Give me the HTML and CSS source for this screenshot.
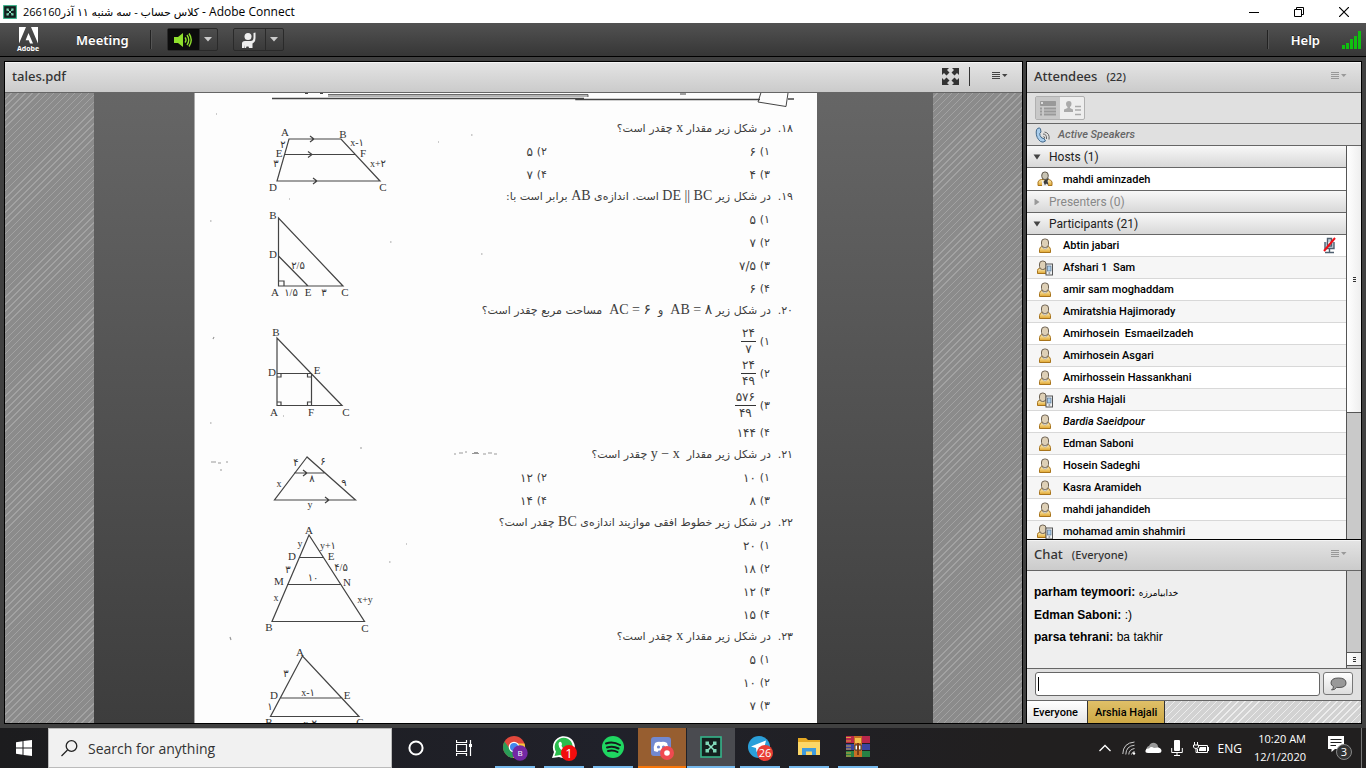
FILE: index.html
```html
<!DOCTYPE html>
<html lang="en">
<head>
<meta charset="utf-8">
<title>Adobe Connect</title>
<link rel="stylesheet" href="styles.css">
</head>
<body>
<svg class="defs" aria-hidden="true">
  <defs>
    <linearGradient id="gold" x1="0" y1="0" x2="0" y2="1"><stop offset="0" stop-color="#fdf0c0"/><stop offset="1" stop-color="#e0a52c"/></linearGradient>
    <symbol id="person" viewBox="0 0 16 16">
      <path d="M2.500 14.500V11.500Q3 8.500 5 8.500H11Q13 8.500 13.500 11.500V14.500Z" fill="url(#gold)" stroke="#a8741c"/>
      <path d="M5 9Q8 13 11 9" fill="#f4f4f4" stroke="#999" stroke-width=".6"/>
      <rect x="4.500" y="1" width="7" height="8.500" rx="3" fill="#ded0b6" stroke="#6d6253"/>
    </symbol>
    <symbol id="device" viewBox="0 0 16 16">
      <path d="M.5 13.500V10.500Q.5 8.500 2.500 8.500H9V13.500Z" fill="url(#gold)" stroke="#a8741c"/>
      <rect x="2.500" y="1" width="6.500" height="8.500" rx="3" fill="#ded0b6" stroke="#6d6253"/>
      <rect x="9" y="4" width="6.500" height="11" fill="#f2f4f6" stroke="#555"/>
      <rect x="10.500" y="6" width="3.500" height="5" fill="#a9cdec" stroke="#58708a" stroke-width=".7"/>
      <path d="M11.500 13H13.200" stroke="#555"/>
    </symbol>
    <symbol id="host" viewBox="0 0 16 16">
      <path d="M1 14.500V11Q2 8.500 4.500 8.500H11.500Q14 8.500 15 11V14.500Z" fill="url(#gold)" stroke="#a8741c"/>
      <path d="M5 9L8 12 11 9V15H5Z" fill="#eee"/>
      <path d="M8 8.500L12 7 10.500 10 11.500 14 9 12.500 8 14.500 6.500 11Z" fill="#3c3c3c"/>
      <rect x="4.800" y="1" width="6.400" height="7.500" rx="3" fill="#c9c4b4" stroke="#5d5548"/>
    </symbol>
    <symbol id="menu" viewBox="0 0 16 8"><path d="M0 .5H8M0 2.500H8M0 4.500H8M0 6.500H8" stroke="currentColor"/><path d="M10 2H15.500L12.750 5Z" fill="currentColor"/></symbol>
    <symbol id="connect" viewBox="0 0 22 22"><rect x="1" y="1" width="20" height="20" fill="#14201e" stroke="#35b58a" stroke-width="1.600"/><path d="M7.500 7.500L14.500 14.500M14.500 7.500L7.500 14.500" stroke="#8fe6c6" stroke-width="1.500"/><path d="M5.500 5.500H9V9H5.500ZM13 5.500H16.500V9H13ZM5.500 13H9V16.500H5.500ZM13 13H16.500V16.500H13Z" fill="#7fd9b8"/></symbol>
  </defs>
</svg>

<header class="titlebar">
  <svg class="app-icon" viewBox="0 0 22 22"><use href="#connect"/></svg>
  <span class="window-title"><bdi dir="rtl">کلاس حساب - سه شنبه ۱۱ آذر266160</bdi> - Adobe Connect</span>
  <button class="win-btn" aria-label="Minimize"><svg viewBox="0 0 10 10"><path d="M0 5.500H10" stroke="#000"/></svg></button>
  <button class="win-btn" aria-label="Restore"><svg viewBox="0 0 10 10"><path d="M.5 2.500H7.500V9.500H.5ZM2.500 2V.5H9.500V7.500H8" fill="none" stroke="#000"/></svg></button>
  <button class="win-btn" aria-label="Close"><svg viewBox="0 0 10 10"><path d="M0 0L10 10M10 0L0 10" stroke="#000" stroke-width="1.200"/></svg></button>
</header>

<nav class="toolbar">
  <div class="adobe"><svg viewBox="0 0 19 17"><path d="M0 0H7L0 16.500ZM12 0H19V16.500ZM9.500 6L14 16.500H11L9.800 13.300H6.600Z" fill="#fff"/></svg><span>Adobe</span></div>
  <button class="menu-btn meeting">Meeting</button>
  <i class="divider"></i>
  <div class="split speaker">
    <button aria-label="Speaker"><svg width="18" height="16" viewBox="0 0 18 16"><path d="M0 5H4L9 1V15L4 11H0Z" fill="#8fe02d"/><path d="M11 5.500Q13 8 11 10.500M13 3Q16.500 8 13 13M15 1.500Q19.500 8 15 14.500" fill="none" stroke="#8fe02d" stroke-width="1.400"/></svg></button>
    <button aria-label="Speaker options"><svg width="8" height="5" viewBox="0 0 8 5"><path d="M0 0H8L4 4.500Z" fill="#ccc"/></svg></button>
  </div>
  <div class="split">
    <button aria-label="Raise hand"><svg width="16" height="16" viewBox="0 0 16 16"><circle cx="7" cy="4.500" r="3.500" fill="#eee"/><path d="M1 16V11.500Q1 9 4 9H9.500Q12.500 9 12.500 5.500V1L14.500 .5V6Q14.500 10 11.500 11.500V16H8L7.500 14.500H5.500L5 16H3.500V13L3 16Z" fill="#eee"/></svg></button>
    <button aria-label="Status options"><svg width="8" height="5" viewBox="0 0 8 5"><path d="M0 0H8L4 4.500Z" fill="#ccc"/></svg></button>
  </div>
  <i class="divider push"></i>
  <button class="menu-btn help">Help</button>
  <svg class="signal" viewBox="0 0 20 18"><path d="M0 14H3V18H0ZM4 12H7V18H4ZM8 8H11V18H8ZM12 5H15V18H12ZM16 0H19V18H16Z" fill="#0fc00f"/></svg>
</nav>

<main class="workspace">
  <section class="pod share">
    <header class="pod-head">
      <h2>tales.pdf</h2>
      <button class="icon-btn fullscreen" aria-label="Full screen"><svg width="17" height="17" viewBox="0 0 17 17" fill="#333"><path d="M0 0H7L5 2 7.500 4.500 4.500 7.500 2 5 0 7ZM17 0H10L12 2 9.500 4.500 12.500 7.500 15 5 17 7ZM0 17H7L5 15 7.500 12.500 4.500 9.500 2 12 0 10ZM17 17H10L12 15 9.500 12.500 12.500 9.500 15 12 17 10Z"/></svg></button>
      <i class="head-rule"></i>
      <button class="icon-btn dark" aria-label="Share options"><svg width="16" height="8"><use href="#menu"/></svg></button>
    </header>
    <div class="viewer">
      <div class="backdrop">
        <div class="page" lang="fa" dir="rtl">
          <svg class="page-top" width="623" height="25" viewBox="194 93 623 25" fill="none" stroke="#444">
            <path d="M272 98.500H584M576 98V99.500H760M788 99H794" stroke-width="1.500"/><path d="M328 94.500H588V97M328 96H588" stroke-width=".8"/><path d="M761 92.500L758 102 786 106.500 788 93"/>
            <path d="M305 93.500H308M320 93.500H323M680 94H686"/>
          </svg>
          <article class="question">
            <h3><b>۱۸.</b>در شکل زیر مقدار <span dir="ltr">x</span> چقدر است؟</h3>
            <ol class="two"><li><b>۱)</b>۶</li><li><b>۲)</b>۵</li><li><b>۳)</b>۴</li><li><b>۴)</b>۷</li></ol>
            <svg class="figure" width="220" height="68" viewBox="194 118 220 68" direction="ltr">
              <path d="M289 139H341L380 181H277ZM285 154.500H355M310 136L314 139 310 142M308 151.500L312 154.500 308 157.500M313 178L317 181 313 184"/>
              <text x="285" y="136">A</text><text x="343" y="138">B</text><text x="279" y="157">E</text><text x="363" y="157">F</text><text x="273" y="191">D</text><text x="383" y="191">C</text><text x="283" y="148" class="n">۲</text><text x="276" y="167" class="n">۳</text><text x="357" y="146" class="n">x-۱</text><text x="378" y="167" class="n">x+۲</text>
              <path class="speck" d="M471 135h1.500M289 199h1M210 221h1.500M390 242h1.500M481 254h1.500M216 114h1M438 142h1"/>
            </svg>
          </article>
          <article class="question">
            <h3><b>۱۹.</b>در شکل زیر <span dir="ltr">DE || BC</span> است. اندازه‌ی <span dir="ltr">AB</span> برابر است با:</h3>
            <ol><li><b>۱)</b>۵</li><li><b>۲)</b>۷</li><li><b>۳)</b>۷/۵</li><li><b>۴)</b>۶</li></ol>
            <svg class="figure" width="220" height="114" viewBox="194 186 220 114" direction="ltr">
              <path d="M278.500 218V286H343ZM278.500 256L308 286M278.500 281H284V286"/>
              <text x="273" y="219">B</text><text x="273" y="258">D</text><text x="275" y="296">A</text><text x="308" y="296">E</text><text x="345" y="296">C</text><text x="298" y="269" class="n">۲/۵</text><text x="291" y="296" class="n">۱/۵</text><text x="324" y="296" class="n">۳</text>
            </svg>
          </article>
          <article class="question">
            <h3><b>۲۰.</b>در شکل زیر <span dir="ltr">AB = ۸</span>&nbsp; و &nbsp;<span dir="ltr">AC = ۶</span>&nbsp; مساحت مربع چقدر است؟</h3>
            <ol class="fractions"><li><b>۱)</b><span class="frac"><i>۲۴</i><i>۷</i></span></li><li><b>۲)</b><span class="frac"><i>۲۴</i><i>۴۹</i></span></li><li><b>۳)</b><span class="frac"><i>۵۷۶</i><i>۴۹</i></span></li><li><b>۴)</b>۱۴۴</li></ol>
            <svg class="figure" width="220" height="144" viewBox="194 300 220 144" direction="ltr">
              <path d="M277 338V405.500H342ZM277 373.500H311.500V405.500M281 373.500V377H277M307.500 373.500V377H311.500M277 402H281V405.500M311.500 402H307.500V405.500"/>
              <text x="276" y="336">B</text><text x="272" y="376">D</text><text x="317" y="374">E</text><text x="274" y="416">A</text><text x="311" y="416">F</text><text x="346" y="416">C</text>
              <path class="speck" d="M213 339l1-2M210 423h1.500M283 416h1M360 448h2"/>
            </svg>
          </article>
          <article class="question">
            <h3><b>۲۱.</b>در شکل زیر مقدار &nbsp;<span dir="ltr">y − x</span> چقدر است؟</h3>
            <ol class="two"><li><b>۱)</b>۱۰</li><li><b>۲)</b>۱۲</li><li><b>۳)</b>۸</li><li><b>۴)</b>۱۴</li></ol>
            <svg class="figure" width="220" height="68" viewBox="194 444 220 68" direction="ltr">
              <path d="M307 457L274.500 500H355.500ZM294 473H325.500M303 470L307 473 303 476M325 497L329 500 325 503"/>
              <text x="296" y="466" class="n">۴</text><text x="323" y="465" class="n">۶</text><text x="312" y="482" class="n">۸</text><text x="279" y="487" class="n">x</text><text x="344" y="486" class="n">۹</text><text x="310" y="508" class="n">y</text>
              <path class="speck" d="M211 462h5M218 463h3M226 462h2M220 470h2M454 454h2M459 453h4M465 452h2M472 453.500h7M474 452.500h4M483 454h3M488 453h4M494 454h3"/>
            </svg>
          </article>
          <article class="question">
            <h3><b>۲۲.</b>در شکل زیر خطوط افقی موازیند اندازه‌ی <span dir="ltr">BC</span> چقدر است؟</h3>
            <ol><li><b>۱)</b>۲۰</li><li><b>۲)</b>۱۸</li><li><b>۳)</b>۱۲</li><li><b>۴)</b>۱۵</li></ol>
            <svg class="figure" width="220" height="114" viewBox="194 512 220 114" direction="ltr">
              <path d="M309 535L272 621.500H364.500ZM299 557.500H324M287 584.500H341.500"/>
              <text x="309" y="534">A</text><text x="292" y="560">D</text><text x="331" y="560">E</text><text x="279" y="585">M</text><text x="347" y="586">N</text><text x="269" y="631">B</text><text x="365" y="632">C</text><text x="300" y="547" class="n">y</text><text x="328" y="549" class="n">y+۱</text><text x="288" y="573" class="n">۳</text><text x="341" y="571" class="n">۴/۵</text><text x="313" y="581" class="n">۱۰</text><text x="276" y="601" class="n">x</text><text x="365" y="603" class="n">x+y</text>
              <path class="speck" d="M389 562h1.500M230 637l1 3M406 544h1"/>
            </svg>
          </article>
          <article class="question">
            <h3><b>۲۳.</b>در شکل زیر مقدار <span dir="ltr">x</span> چقدر است؟</h3>
            <ol><li><b>۱)</b>۵</li><li><b>۲)</b>۱۰</li><li><b>۳)</b>۷</li></ol>
            <svg class="figure" width="220" height="91" viewBox="194 626 220 91" direction="ltr">
              <path d="M302.500 656L270.500 716.500H359ZM280 698H342.500"/>
              <text x="300" y="656">A</text><text x="274" y="699">D</text><text x="347" y="699">E</text><text x="269" y="726">B</text><text x="360" y="726">C</text><text x="286" y="677" class="n">۳</text><text x="308" y="696" class="n">x-۱</text><text x="270" y="710" class="n">۱</text><text x="310" y="727" class="n">x-۲</text>
            </svg>
          </article>
        </div>
      </div>
    </div>
  </section>

  <aside class="side">
    <section class="attendees">
      <header class="pod-head"><h2>Attendees</h2><small>(22)</small><button class="icon-btn end" aria-label="Attendee options"><svg width="16" height="8"><use href="#menu"/></svg></button></header>
      <div class="views"><div class="view-switch">
        <button class="on" aria-label="Attendee list"><svg width="16" height="15" viewBox="0 0 16 15"><path d="M.5.5H15.500V4.500H.5Z" fill="#999" stroke="#999"/><path d="M1 1h2v2H1Z" fill="#ddd"/><path d="M0 7.500H2M4 7.500H16M0 10.500H2M4 10.500H16M0 13.500H2M4 13.500H16" stroke="#999" stroke-width="2"/></svg></button>
        <button aria-label="Status view"><svg width="17" height="15" viewBox="0 0 17 15"><path d="M5 0Q7.500 0 7.500 3 7.500 5 6 6V7L9 8.500V11H0V8.500L3.500 7V6Q2 5 2 3 2 0 5 0Z" fill="#aaa"/><path d="M11 5.500H17M11 9H17M11 13.500H17" stroke="#aaa" stroke-width="1.600"/></svg></button>
      </div></div>
      <div class="speakers"><svg width="16" height="16" viewBox="0 0 16 16"><path d="M2.500 1.500Q5 0 5.500 2L6 5Q4 6 5 8.500 6.500 12 9 11.500L10.500 14Q8 16 5.500 14.500 1 11 1.200 5 1.300 2.500 2.500 1.500Z" fill="#a9cdec" stroke="#42688a"/><path d="M8 7Q12 7 11.500 12M8.500 9.500Q10 9.500 9.500 11.500M9.500 5Q15 6 14 12.500" fill="none" stroke="#666"/></svg><em>Active Speakers</em></div>
      <div class="roster">
        <div class="roster-list">
          <button class="group"><svg viewBox="0 0 8 6"><path d="M.5.5H7.500L4 5.500Z" fill="#444"/></svg>Hosts (1)</button>
          <ul class="hosts"><li><svg><use href="#host"/></svg>mahdi aminzadeh</li></ul>
          <button class="group off"><svg viewBox="0 0 8 6"><path d="M1.500-.5V6.500L6.500 3Z" fill="#999"/></svg>Presenters (0)</button>
          <button class="group"><svg viewBox="0 0 8 6"><path d="M.5.5H7.500L4 5.500Z" fill="#444"/></svg>Participants (21)</button>
          <ul>
            <li><svg><use href="#person"/></svg>Abtin jabari<svg class="muted" viewBox="0 0 13 17"><path d="M4.500 1.500H8.500V9H4.500ZM2 5V11.500H11V5M6.500 11.500V15M2 15.500H11" fill="#c9d4df" stroke="#4f6070" stroke-width="1.400"/><path d="M1 14L12 1" stroke="#f00f16" stroke-width="2"/></svg></li>
            <li><svg><use href="#device"/></svg>Afshari 1&nbsp; Sam</li>
            <li><svg><use href="#person"/></svg>amir sam moghaddam</li>
            <li><svg><use href="#person"/></svg>Amiratshia Hajimorady</li>
            <li><svg><use href="#person"/></svg>Amirhosein&nbsp; Esmaeilzadeh</li>
            <li><svg><use href="#person"/></svg>Amirhosein Asgari</li>
            <li><svg><use href="#person"/></svg>Amirhossein Hassankhani</li>
            <li><svg><use href="#device"/></svg>Arshia Hajali</li>
            <li><svg><use href="#person"/></svg><em>Bardia Saeidpour</em></li>
            <li><svg><use href="#person"/></svg>Edman Saboni</li>
            <li><svg><use href="#person"/></svg>Hosein Sadeghi</li>
            <li><svg><use href="#person"/></svg>Kasra Aramideh</li>
            <li><svg><use href="#person"/></svg>mahdi jahandideh</li>
            <li><svg><use href="#device"/></svg>mohamad amin shahmiri</li>
          </ul>
        </div>
        <div class="scrollbar"><div class="thumb long"></div></div>
      </div>
    </section>

    <section class="chat">
      <header class="pod-head"><h2>Chat</h2><small>(Everyone)</small><button class="icon-btn end" aria-label="Chat options"><svg width="16" height="8"><use href="#menu"/></svg></button></header>
      <div class="log">
        <div class="messages">
          <p><b>parham teymoori:</b> <bdi class="fa">خدابیامرزه</bdi></p>
          <p><b>Edman Saboni:</b> :)</p>
          <p><b>parsa tehrani:</b> ba takhir</p>
        </div>
        <div class="scrollbar bottom"><div class="thumb short"></div></div>
      </div>
      <form class="compose">
        <label class="field"><input type="text" aria-label="Chat message"><i class="caret"></i></label>
        <button type="button" class="send" aria-label="Send message"><svg width="17" height="14" viewBox="0 0 17 14"><path d="M8.500 1Q16 1 16 6 16 10.500 9 10.500L6.500 10.400Q5 13 1.500 13 3.500 11.500 3.500 9.500 1 8.500 1 6 1 1 8.500 1Z" fill="#999" stroke="#555"/></svg></button>
      </form>
      <div class="tabs"><button>Everyone</button><button class="alert">Arshia Hajali</button></div>
    </section>
  </aside>
</main>

<footer class="taskbar">
  <button class="start" aria-label="Start"><svg width="16" height="16" viewBox="0 0 16 16" fill="#fff"><path d="M0 2.200L6.500 1.300V7.500H0ZM7.500 1.100L16 0V7.500H7.500ZM0 8.500H6.500V14.700L0 13.800ZM7.500 8.500H16V16L7.500 14.900Z"/></svg></button>
  <label class="search"><svg width="17" height="17" viewBox="0 0 17 17"><circle cx="10.500" cy="6" r="5.300" fill="none" stroke="#222" stroke-width="1.300"/><path d="M6.500 10L.5 16" stroke="#222" stroke-width="1.300"/></svg><input type="text" placeholder="Search for anything" aria-label="Search for anything"></label>
  <button class="task" aria-label="Cortana"><svg width="16" height="16" viewBox="0 0 16 16"><circle cx="8" cy="8" r="6.600" fill="none" stroke="#fff" stroke-width="2"/></svg></button>
  <button class="task" aria-label="Task view"><svg width="16" height="16" viewBox="0 0 16 16" fill="none" stroke="#fff"><path d="M.5 0V2.500H10.500V0M.5 4.500H10.500V11.500H.5ZM.5 16V13.500H10.500V16M14.500 0V16" stroke-width="1.200"/><path d="M13 4h3v3h-3Z" fill="#fff" stroke="none"/></svg></button>
  <div class="apps">
    <button class="app" aria-label="Chrome"><svg viewBox="0 0 26 26"><circle cx="12" cy="12" r="11" fill="#e2483c"/><path d="M2.500 6.500A11 11 0 0 0 11 23L15 15 8 14Z" fill="#2a9d57"/><path d="M11 23A11 11 0 0 0 22.500 8.500H12L16 14Z" fill="#f5c73b"/><circle cx="12" cy="12" r="5.300" fill="#fff"/><circle cx="12" cy="12" r="4" fill="#4286ee"/><circle cx="18" cy="18" r="7.700" fill="#7428a4"/><text x="18" y="21" font-size="8">B</text></svg></button>
    <button class="app" aria-label="WhatsApp"><svg viewBox="0 0 26 26"><path d="M1 23L3 17A11 11 0 1 1 8 22Z" fill="#fff"/><path d="M3.500 21L5 16.500A9 9 0 1 1 9 20Z" fill="#2bbc4c"/><path d="M8 7.500Q10 5.500 11 9L10.500 11Q12 14 14.500 14.500L16 13.500 18.500 15Q17 18 14 17 8 15 7.500 9Z" fill="#fff"/><circle cx="18" cy="18" r="8" fill="#f20d0d"/><text x="18" y="22.500" font-size="13">1</text></svg></button>
    <button class="app" aria-label="Spotify"><svg viewBox="0 0 26 26"><circle cx="13" cy="12" r="11" fill="#1fd761"/><path d="M6 8.500Q13 6 20 10M7 12.500Q13 10.500 18.500 13.500M8 16Q13 14.500 17.500 17" fill="none" stroke="#161a1c" stroke-width="2" stroke-linecap="round"/></svg></button>
    <button class="app discord" aria-label="Discord"><svg viewBox="0 0 26 26"><path d="M5 2H19Q22 2 22 5V23L18 21H5Q2 21 2 18V5Q2 2 5 2Z" fill="#7289d0"/><path d="M6 8Q9 6 12 7 15 6 18 8 20 12 19 16L15.500 17 14.500 15.500H9.500L8.500 17 5 16Q4 12 6 8Z" fill="#fff"/><circle cx="9.500" cy="12" r="1.600" fill="#7289d0"/><circle cx="14.500" cy="12" r="1.600" fill="#7289d0"/><circle cx="18" cy="18" r="7" fill="#f04a50"/><circle cx="18" cy="18" r="2.800" fill="#fff"/></svg></button>
    <button class="app active" aria-label="Adobe Connect"><svg viewBox="-2 -1 26 26"><use href="#connect" width="22" height="22"/></svg></button>
    <button class="app" aria-label="Telegram"><svg viewBox="0 0 26 26"><circle cx="12" cy="12" r="11" fill="#2b9fd9"/><path d="M4 11.500L19 5.500 16 18 11.500 15 9.500 17 9 13Z" fill="#fff"/><circle cx="18" cy="18" r="8" fill="#e93e35"/><text x="18" y="22" font-size="11">26</text></svg></button>
    <button class="app" aria-label="File Explorer"><svg viewBox="0 0 26 26"><path d="M2 3H10L12 5H24V20H2Z" fill="#e5a823"/><path d="M2 7H24V20H2Z" fill="#fcd767"/><path d="M6 20V13H20V20H16V16.500H10V20Z" fill="#3f9bdd"/></svg></button>
    <button class="app" aria-label="WinRAR"><svg viewBox="0 0 26 26"><path d="M1 1H25V8H1Z" fill="#b8274a"/><path d="M1 9H25V15H1Z" fill="#3b459f"/><path d="M1 16H25V22H1Z" fill="#278244"/><path d="M1 2.500H6M1 6H6M1 11H6M1 14H6M1 18H6M1 21H6" stroke="#d9a43e"/><path d="M9 1H17V22H9Z" fill="#c66f25"/><path d="M10 3H16V8H10Z" fill="#f2c14c"/><path d="M10 10H16V15H10Z" fill="#fff" stroke="#333"/><path d="M13 8V20" stroke="#7b3b14" stroke-width="2"/></svg></button>
  </div>
  <div class="tray">
    <button aria-label="Show hidden icons"><svg width="12" height="8" viewBox="0 0 12 8"><path d="M.5 7L6 1.500 11.500 7" fill="none" stroke="#fff" stroke-width="1.300"/></svg></button>
    <button aria-label="Network"><svg width="14" height="14" viewBox="0 0 14 14" fill="none" stroke="#ccc"><path d="M.8 13Q1 2 12.500 1M3.800 13.500Q4 5 12.500 4.200M6.800 13.500Q7 8.500 12.500 7.500M9.500 13.500Q10 11 12.500 10.500"/><circle cx="12" cy="12.500" r="1.200" fill="#fff" stroke="none"/></svg></button>
    <button aria-label="OneDrive"><svg width="17" height="12" viewBox="0 0 17 12"><path d="M1 8Q2 4 4 4 6 0 10 1 13 2 13 5L16 8 8 11Z" fill="#999"/><path d="M3 11Q0 11 .5 8.500 1 6 4 6.500 6 4 9 6L13 5.500Q16.500 6 16.500 9 16.500 11 14 11Z" fill="#fff"/></svg></button>
    <button aria-label="Microphone"><svg width="12" height="16" viewBox="0 0 12 16"><rect x="3" y="0" width="6" height="11" rx="1" fill="#fff"/><path d="M.7 8V12.500H11.300V8M6 12.500V15.500M3 15.500H9" fill="none" stroke="#fff"/></svg></button>
    <button aria-label="Battery"><svg width="17" height="12" viewBox="0 0 17 12"><path d="M6 3.500H14.500V10.500H4.500V7M15.500 5V9M1.500 0V3M4.500 0V3M.5 3H5.500V5Q5 6.500 3 6.500 1 6.500.5 5ZM3 6.500V10.500H4.500" fill="none" stroke="#fff"/><path d="M7 5H13V9H6V7Z" fill="#fff"/></svg></button>
    <button class="lang">ENG</button>
    <time class="clock">10:20 AM<br>12/1/2020</time>
    <button class="notify" aria-label="Notifications"><svg width="26" height="26" viewBox="0 0 26 26"><path d="M1 1H17V14H8L4.500 17V14H1Z" fill="#fff"/><path d="M3.500 4.500H14.500M3.500 7.500H14.500M3.500 10.500H9" stroke="#222"/><circle cx="17" cy="17" r="7.500" fill="#333" stroke="#888"/><text x="17" y="21" font-size="11">3</text></svg></button>
  </div>
</footer>
</body>
</html>
```
FILE: styles.css
```css
* { box-sizing: border-box; }
body { margin: 0; height: 100vh; display: flex; flex-direction: column; overflow: hidden; background: #404040; font-family: "Noto Sans", "DejaVu Sans", sans-serif; font-size: 11px; color: #000; }
button { border: 0; margin: 0; padding: 0; background: none; font: inherit; color: inherit; display: flex; align-items: center; justify-content: center; }
h2, h3, p, ol, ul { margin: 0; padding: 0; font-weight: normal; list-style: none; }
svg { display: block; flex: none; }
.defs { position: absolute; width: 0; height: 0; }

.titlebar { height: 23px; flex: none; display: flex; align-items: center; background: #fff; padding-left: 3px; font-family: "Open Sans", "DejaVu Sans", sans-serif; font-size: 12px; }
.app-icon { width: 14px; height: 14px; }
.window-title { flex: 1; padding-left: 6px; white-space: nowrap; }
.window-title bdi { font-size: 11px; }
.win-btn { width: 45px; height: 22px; }
.win-btn:nth-of-type(1) { margin-right: 0; }
.win-btn svg { width: 10px; height: 10px; }

.toolbar { height: 34px; flex: none; display: flex; align-items: center; background: linear-gradient(#525252, #363636); border-bottom: 1px solid #000; padding: 0 4px 0 18px; color: #fff; }
.adobe { width: 20px; display: flex; flex-direction: column; align-items: center; }
.adobe svg { width: 19px; height: 17px; }
.adobe span { font: bold 7px/9px "Open Sans", sans-serif; }
.menu-btn { font-weight: 600; font-size: 13px; text-shadow: 0 -1px #222; }
.meeting { margin: 0 21px 0 38px; }
.help { margin: 0 22px; }
.divider { width: 2px; height: 19px; background: #222; border-right: 1px solid #555; }
.push { margin-left: auto; }
.split { display: flex; margin-left: 15px; height: 23px; border: 1px solid #2a2a2a; border-radius: 2px; background: linear-gradient(#4d4d4d, #3a3a3a); }
.split button:first-child { width: 32px; border-right: 1px solid #2a2a2a; }
.split button:last-child { width: 17px; }
.speaker button:first-child { background: #0c0c0c; }
.signal { width: 20px; height: 18px; }

.workspace { flex: 1; min-height: 0; display: grid; grid-template-columns: minmax(0, 1fr) 336px; gap: 3px; padding: 4px; }
.pod, .side { border: 1px solid #000; display: flex; flex-direction: column; min-height: 0; min-width: 0; background: #e0e0e0; }
.pod-head { height: 31px; flex: none; display: flex; align-items: center; padding: 0 7px 2px; border-bottom: 1px solid #666; background: linear-gradient(#e4e4e4, #cbcbcb); box-shadow: inset 0 1px #f4f4f4; color: #333; }
.pod-head h2 { font-size: 13px; font-weight: 500; }
.pod-head small { font-size: 11px; font-weight: 500; padding-left: 9px; }
.icon-btn { color: #999; }
.dark { color: #444; margin: 0 7px 0 22px; }
.fullscreen { margin-left: auto; }
.end { margin: 0 7px 0 auto; }
.head-rule { width: 1px; height: 19px; margin-left: 10px; background: #333; }

.viewer { flex: 1; min-height: 0; overflow: hidden; padding: 0 89px; background: repeating-linear-gradient(135deg, #8b8b8b 0 4px, #a2a2a2 4px 5px); }
.backdrop { height: 100%; padding: 0 116px 0 100px; background: linear-gradient(#666, #3d3d3d); }
.page { height: 100%; overflow: hidden; background: #fdfdfd; box-shadow: inset 1px 0 #aaa; color: #3c3c3c; font: 12px "DejaVu Sans", sans-serif; }
.page-top { width: 100%; }
.question { position: relative; padding-right: 24px; }
.question h3 { height: 22px; line-height: 22px; font-size: 11px; white-space: nowrap; }
.question h3 b { display: inline-block; width: 22px; font-weight: normal; }
.question h3 span { font: 14px "Liberation Serif", "DejaVu Sans", serif; }
.question ol { padding-right: 23px; }
.question li { height: 23px; display: flex; align-items: center; }
.question li b { font-size: 11px; font-weight: normal; width: 14px; }
.two { display: grid; grid-template-columns: 223px 1fr; }
.question .fractions { padding-top: 3px; }
.fractions li:not(:last-child) { height: 32px; }
.frac { display: flex; flex-direction: column; text-align: center; line-height: 15px; }
.frac i { font-style: normal; padding: 0 1px; }
.frac i:first-child { border-bottom: 1px solid #333; }
.figure { position: absolute; left: 0; top: 0; overflow: visible; }
.figure path { fill: none; stroke: #444; stroke-width: 1.2; }
.figure text { font: 11px "Liberation Serif", "DejaVu Sans", serif; text-anchor: middle; fill: #333; }
.figure .n { font-size: 10px; }
.figure .speck { stroke: #999; }

.attendees { flex: 1; min-height: 0; display: flex; flex-direction: column; }
.views { height: 31px; flex: none; border-bottom: 1px solid #666; padding: 3px 8px; }
.view-switch { width: 50px; height: 24px; display: flex; border: 1px solid #b0b0b0; border-radius: 2px; background: #eee; }
.view-switch button { flex: 1; }
.view-switch .on { background: #c8c8c8; }
.speakers { height: 22px; flex: none; display: flex; align-items: center; gap: 7px; padding-left: 8px; color: #666; font-family: Roboto, sans-serif; font-weight: 500; border-bottom: 1px solid #666; }
.roster { flex: 1; min-height: 0; display: flex; background: #fff; font-family: Roboto, sans-serif; }
.roster-list { flex: 1; overflow: hidden; }
.group { width: 100%; height: 22px; justify-content: flex-start; gap: 8px; padding-left: 6px; font-size: 12px; color: #222; background: linear-gradient(#f8f8f8, #d8d8d8); border-bottom: 1px solid #666; }
.group svg { width: 8px; height: 6px; }
.off { color: #888; }
.roster li { height: 22px; display: flex; align-items: center; gap: 10px; padding-left: 10px; font-weight: 500; border-bottom: 1px solid #d8d8d8; white-space: nowrap; }
.roster li:nth-child(even) { background: #f6f6f6; }
.roster li svg { width: 16px; height: 16px; }
.roster .hosts li { height: 23px; border-color: #666; }
.roster li .muted { width: 13px; height: 17px; margin: 0 10px 0 auto; }
.scrollbar { width: 15px; flex: none; display: flex; flex-direction: column; border-left: 1px solid #555; background: #c9c9c9; }
.bottom { justify-content: flex-end; padding-bottom: 2px; }
.thumb { display: flex; align-items: center; justify-content: center; background: linear-gradient(90deg, #fff, #eee); border-bottom: 1px solid #555; }
.thumb::after { content: ""; width: 3px; height: 5px; background: repeating-linear-gradient(#333 0 1px, transparent 1px 2px); }
.long { height: 68%; }
.short { height: 14px; border-top: 1px solid #555; }

.chat { flex: none; border-top: 1px solid #000; }
.log { height: 98px; display: flex; background: #efefef; border-bottom: 1px solid #666; }
.messages { flex: 1; padding: 10px 7px; font: 12px/22px "Liberation Sans", sans-serif; }
.fa { font-family: "DejaVu Sans", sans-serif; font-size: 9px; }
.compose { height: 32px; display: flex; gap: 3px; padding: 3px 8px; border-bottom: 1px solid #666; }
.field { flex: 1; position: relative; }
.field input { width: 100%; height: 24px; border: 1px solid #666; border-radius: 3px; background: #fff; padding: 0 4px; font: 12px "Liberation Sans", sans-serif; }
.caret { position: absolute; left: 3px; top: 5px; width: 1px; height: 14px; background: #000; }
.send { width: 30px; height: 23px; border: 1px solid #777; border-radius: 3px; background: linear-gradient(#fff, #ddd); }
.tabs { height: 22px; display: flex; background: repeating-linear-gradient(135deg, #d2d2d2 0 4px, #ededed 4px 5px); font-family: Roboto, sans-serif; font-size: 11px; font-weight: 500; }
.tabs button { padding: 0 9px 0 6px; background: linear-gradient(#fff, #e4e4e4); border-right: 1px solid #333; }
.tabs .alert { padding: 0 7px; background: linear-gradient(#e0c068, #cda845); }

.taskbar { height: 40px; flex: none; display: flex; background: linear-gradient(90deg, #1c1c1e, #20212a 45%, #211f1f 75%); color: #fff; font-family: "Open Sans", sans-serif; }
.start, .task { width: 48px; }
.search { width: 344px; display: flex; align-items: center; gap: 10px; padding-left: 12px; background: #f1f1f1; border: 1px solid #bbb; }
.search input { flex: 1; min-width: 0; border: 0; padding: 0; background: none; font: 14px "Open Sans", sans-serif; }
.search input::placeholder { color: #333; opacity: 1; }
.apps { display: flex; gap: 1px; margin-left: 3px; }
.app { width: 48px; padding: 0 4px; position: relative; }
.app::after { content: ""; position: absolute; left: 4px; right: 4px; bottom: 0; height: 2px; background: #76b9ed; }
.app svg { width: 26px; height: 26px; }
.taskbar text { fill: #fff; text-anchor: middle; font-family: "Open Sans", sans-serif; }
.discord { background: #975e30; }
.discord::after { left: 0; right: 0; background: #f7770b; }
.active { background: #4a4b50; }
.active::after { left: 0; right: 0; }
.tray { margin-left: auto; margin-right: 4px; display: flex; border-right: 1px solid #777; }
.tray button { width: 24px; }
.tray .lang { width: 29px; justify-content: flex-end; font-size: 12px; }
.clock { width: 71px; padding: 2px 7px 0 0; text-align: right; font-size: 11px; line-height: 18px; }
.tray .notify { width: 48px; padding-left: 5px; }
```
